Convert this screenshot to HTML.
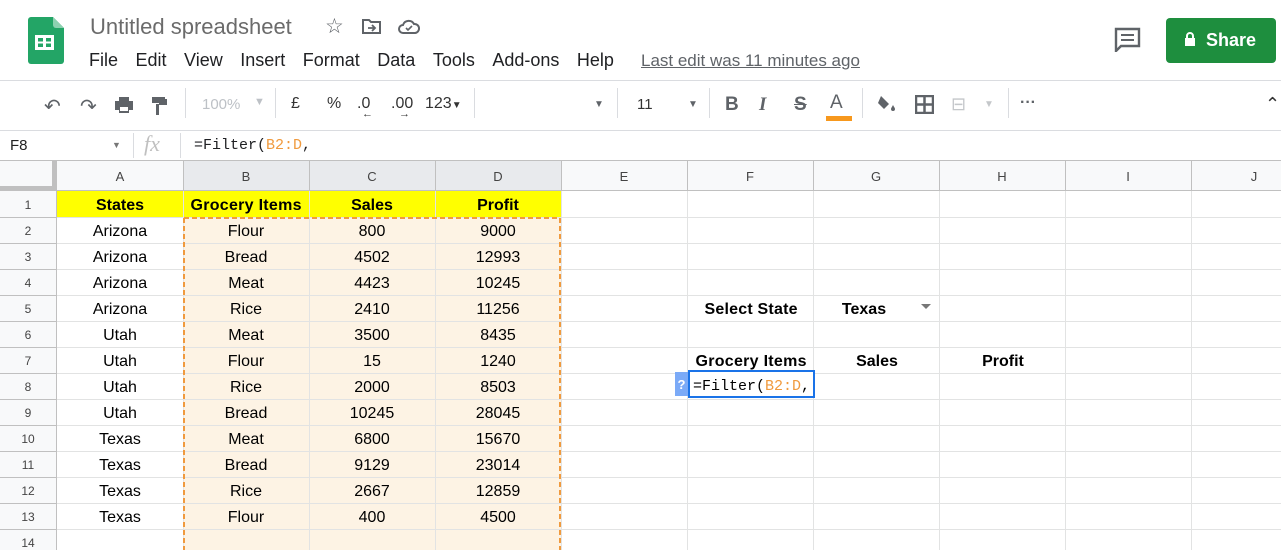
<!DOCTYPE html>
<html><head><style>
*{margin:0;padding:0;box-sizing:border-box}
body{width:1281px;height:550px;overflow:hidden;background:#fff;font-family:"Liberation Sans",Arial,sans-serif;position:relative;color:#202124}
.a{position:absolute}
.menu span{margin-right:17.5px}
.ic{position:absolute;color:#5f6368;font-size:17px}
</style></head><body>
<svg class="a" style="left:28px;top:17px" width="36" height="47" viewBox="0 0 36 47"><path d="M3 0h22l11 11v33a3 3 0 0 1-3 3H3a3 3 0 0 1-3-3V3a3 3 0 0 1 3-3z" fill="#23a566"/><path d="M25 0l11 11H28a3 3 0 0 1-3-3z" fill="#8ed1b1"/><rect x="7" y="18" width="19" height="15" fill="#fff"/><rect x="10" y="21" width="5" height="3.5" fill="#23a566"/><rect x="18" y="21" width="5" height="3.5" fill="#23a566"/><rect x="10" y="26.5" width="5" height="3.5" fill="#23a566"/><rect x="18" y="26.5" width="5" height="3.5" fill="#23a566"/></svg>
<div class="a" style="left:90px;top:14px;font-size:22px;color:#6b6b6b">Untitled spreadsheet</div>
<div class="a" style="left:325px;top:14px;font-size:21px;color:#5f6368">☆</div>
<svg class="a" style="left:362px;top:18px" width="20" height="17"><path d="M1 2h6l2 2h9v11H1z" fill="none" stroke="#5f6368" stroke-width="2"/><path d="M6 10h7M10 7l3 3-3 3" fill="none" stroke="#5f6368" stroke-width="1.8"/></svg>
<svg class="a" style="left:398px;top:18px" width="22" height="17"><path d="M5 15a4 4 0 0 1 0-8 6 6 0 0 1 11-1 4.5 4.5 0 0 1 1 9z" fill="none" stroke="#5f6368" stroke-width="2"/><path d="M8 10l2 2 4-4" fill="none" stroke="#5f6368" stroke-width="1.6"/></svg>
<div class="a menu" style="left:89px;top:50px;font-size:18px;color:#202124;white-space:nowrap"><span>File</span><span>Edit</span><span>View</span><span>Insert</span><span>Format</span><span>Data</span><span>Tools</span><span>Add-ons</span><span>Help</span></div>
<div class="a" style="left:641px;top:51px;font-size:17px;color:#5f6368;text-decoration:underline">Last edit was 11 minutes ago</div>
<svg class="a" style="left:1114px;top:27px" width="27" height="25"><path d="M2 2h23v17H7l-5 5z" fill="none" stroke="#5f6368" stroke-width="2.4"/><path d="M7 8h13M7 13h13" stroke="#5f6368" stroke-width="2"/></svg>
<div class="a" style="left:1166px;top:18px;width:110px;height:45px;background:#1e8e3e;border-radius:4px;color:#fff;font-size:18px;font-weight:bold;line-height:45px;padding-left:40px">Share</div>
<svg class="a" style="left:1184px;top:32px" width="12" height="15"><rect x="1" y="6" width="10" height="8" fill="#fff"/><path d="M3 6V4a3 3 0 0 1 6 0v2" fill="none" stroke="#fff" stroke-width="2"/></svg>
<div class="a" style="left:0;top:80px;width:1281px;height:1px;background:#dadce0"></div>
<div class="ic" style="left:44px;top:94px;font-size:20px">↶</div>
<div class="ic" style="left:80px;top:94px;font-size:20px">↷</div>
<svg class="a" style="left:114px;top:96px" width="20" height="18"><path d="M5 1h10v4H5z M1 5h18v9h-4v3H5v-3H1z" fill="#5f6368"/><rect x="6" y="11" width="8" height="4" fill="#fff"/></svg>
<svg class="a" style="left:151px;top:96px" width="16" height="20"><path d="M1 1h13v6H1z M14 3h2v6H8v10H5V8h3v-1" fill="#5f6368"/></svg>
<div class="a" style="left:185px;top:88px;width:1px;height:30px;background:#dadce0"></div>
<div class="ic" style="left:202px;top:96px;font-size:15px;color:#bdc1c6">100%</div>
<div class="ic" style="left:254px;top:96px;font-size:11px;color:#bdc1c6">▼</div>
<div class="a" style="left:275px;top:88px;width:1px;height:30px;background:#dadce0"></div>
<div class="ic" style="left:291px;top:95px;font-size:16px;color:#333">£</div>
<div class="ic" style="left:327px;top:95px;font-size:16px;color:#333">%</div>
<div class="ic" style="left:357px;top:95px;font-size:16px;color:#333">.0</div>
<div class="ic" style="left:362px;top:108px;font-size:11px;color:#333">←</div>
<div class="ic" style="left:391px;top:95px;font-size:16px;color:#333">.00</div>
<div class="ic" style="left:399px;top:108px;font-size:11px;color:#333">→</div>
<div class="ic" style="left:425px;top:95px;font-size:16px;color:#333">123<span style="font-size:10px">▼</span></div>
<div class="a" style="left:474px;top:88px;width:1px;height:30px;background:#dadce0"></div>
<div class="ic" style="left:594px;top:99px;font-size:10px">▼</div>
<div class="a" style="left:617px;top:88px;width:1px;height:30px;background:#dadce0"></div>
<div class="ic" style="left:637px;top:96px;font-size:15px;color:#333">11</div>
<div class="ic" style="left:688px;top:99px;font-size:10px">▼</div>
<div class="a" style="left:709px;top:88px;width:1px;height:30px;background:#dadce0"></div>
<div class="ic" style="left:725px;top:94px;font-size:19px;font-weight:bold">B</div>
<div class="ic" style="left:759px;top:94px;font-size:19px;font-style:italic;font-weight:bold;font-family:'Liberation Serif',serif">I</div>
<div class="ic" style="left:794px;top:94px;font-size:19px;text-decoration:line-through;font-weight:bold">S</div>
<div class="ic" style="left:830px;top:92px;font-size:19px">A</div>
<div class="a" style="left:826px;top:116px;width:26px;height:5px;background:#f7981d"></div>
<div class="a" style="left:862px;top:88px;width:1px;height:30px;background:#dadce0"></div>
<svg class="a" style="left:877px;top:94px" width="20" height="18"><path d="M4 2l8 8-5 5-6-6z" fill="#5f6368"/><path d="M16 11c1 2 2 3 2 4a2 2 0 0 1-4 0c0-1 1-2 2-4z" fill="#5f6368"/></svg>
<svg class="a" style="left:915px;top:95px" width="19" height="19"><rect x="1" y="1" width="17" height="17" fill="none" stroke="#5f6368" stroke-width="2.5"/><path d="M9.5 1v17M1 9.5h17" stroke="#5f6368" stroke-width="2.5"/></svg>
<div class="ic" style="left:951px;top:94px;color:#c4c7ca;font-size:18px">⊟</div>
<div class="ic" style="left:984px;top:99px;font-size:10px;color:#c4c7ca">▼</div>
<div class="a" style="left:1008px;top:88px;width:1px;height:30px;background:#dadce0"></div>
<div class="ic" style="left:1020px;top:94px;font-size:16px;font-weight:bold">···</div>
<div class="ic" style="left:1265px;top:94px;font-size:18px;color:#333">⌃</div>
<div class="a" style="left:0;top:130px;width:1281px;height:1px;background:#dadce0"></div>
<div class="a" style="left:10px;top:137px;font-size:15px;color:#222">F8</div>
<div class="a" style="left:112px;top:140px;font-size:9px;color:#777">▼</div>
<div class="a" style="left:133px;top:133px;width:1px;height:25px;background:#dadce0"></div>
<div class="a" style="left:144px;top:131px;font-size:22px;font-style:italic;color:#c0c0c0;font-family:'Liberation Serif',serif">fx</div>
<div class="a" style="left:180px;top:133px;width:1px;height:25px;background:#dadce0"></div>
<div class="a" style="left:194px;top:137px;font-size:15px;font-family:'Liberation Mono',monospace">=Filter(<span style="color:#f09a3e">B2:D</span>,</div>
<div class="a" style="left:0;top:160px;width:1281px;height:1px;background:#c0c0c0"></div>
<svg class="a" style="left:0;top:161px" width="1281" height="389">
<rect x="0" y="0" width="1281" height="30" fill="#f8f9fa"/>
<rect x="183" y="0" width="378" height="30" fill="#e8eaed"/>
<rect x="0" y="30" width="57" height="359" fill="#f8f9fa"/>
<rect x="52" y="0" width="5" height="30" fill="#c0c0c0"/>
<rect x="0" y="25" width="57" height="5" fill="#c0c0c0"/>
<rect x="57" y="30" width="504" height="26" fill="#ffff00"/>
<rect x="183" y="56" width="378" height="333" fill="#fdf3e4"/>
<g stroke="#e2e3e3" stroke-width="1">
<path d="M57 82.5h1224M57 108.5h1224M57 134.5h1224M57 160.5h1224M57 186.5h1224M57 212.5h1224M57 238.5h1224M57 264.5h1224M57 290.5h1224M57 316.5h1224M57 342.5h1224M57 368.5h1224M57 56.5h1224"/>
<path d="M183.5 30v359M309.5 30v359M435.5 30v359M561.5 30v359M687.5 30v359M813.5 30v359M939.5 30v359M1065.5 30v359M1191.5 30v359"/>
</g>
<g stroke="#c0c0c0"><path d="M0 29.5h1281M56.5 0v389M183.5 0v30M309.5 0v30M435.5 0v30M561.5 0v30M687.5 0v30M813.5 0v30M939.5 0v30M1065.5 0v30M1191.5 0v30"/>
<path d="M0 56.5h57M0 82.5h57M0 108.5h57M0 134.5h57M0 160.5h57M0 186.5h57M0 212.5h57M0 238.5h57M0 264.5h57M0 290.5h57M0 316.5h57M0 342.5h57M0 368.5h57"/></g>
<path d="M184 57H560V389M184 57V389" fill="none" stroke="#f09a3e" stroke-width="2" stroke-dasharray="5,3"/>
<g font-family="Liberation Sans" font-size="13" fill="#444" text-anchor="middle">
<text x="120" y="20">A</text><text x="246" y="20">B</text><text x="372" y="20">C</text><text x="498" y="20">D</text><text x="624" y="20">E</text><text x="750" y="20">F</text><text x="876" y="20">G</text><text x="1002" y="20">H</text><text x="1128" y="20">I</text><text x="1254" y="20">J</text>
<g font-size="12"><text x="28" y="48">1</text><text x="28" y="74">2</text><text x="28" y="100">3</text><text x="28" y="126">4</text><text x="28" y="152">5</text><text x="28" y="178">6</text><text x="28" y="204">7</text><text x="28" y="230">8</text><text x="28" y="256">9</text><text x="28" y="282">10</text><text x="28" y="308">11</text><text x="28" y="334">12</text><text x="28" y="360">13</text><text x="28" y="386">14</text></g>
</g>
<g font-family="Liberation Sans" font-size="16" fill="#000" text-anchor="middle">
<g font-weight="bold"><text x="120" y="49">States</text><text x="246" y="49" textLength="111">Grocery Items</text><text x="372" y="49">Sales</text><text x="498" y="49">Profit</text>
<text x="751" y="153" textLength="93">Select State</text><text x="864" y="153">Texas</text>
<text x="751" y="205" textLength="111">Grocery Items</text><text x="877" y="205">Sales</text><text x="1003" y="205">Profit</text></g>
<text x="120" y="75">Arizona</text><text x="246" y="75">Flour</text><text x="372" y="75">800</text><text x="498" y="75">9000</text>
<text x="120" y="101">Arizona</text><text x="246" y="101">Bread</text><text x="372" y="101">4502</text><text x="498" y="101">12993</text>
<text x="120" y="127">Arizona</text><text x="246" y="127">Meat</text><text x="372" y="127">4423</text><text x="498" y="127">10245</text>
<text x="120" y="153">Arizona</text><text x="246" y="153">Rice</text><text x="372" y="153">2410</text><text x="498" y="153">11256</text>
<text x="120" y="179">Utah</text><text x="246" y="179">Meat</text><text x="372" y="179">3500</text><text x="498" y="179">8435</text>
<text x="120" y="205">Utah</text><text x="246" y="205">Flour</text><text x="372" y="205">15</text><text x="498" y="205">1240</text>
<text x="120" y="231">Utah</text><text x="246" y="231">Rice</text><text x="372" y="231">2000</text><text x="498" y="231">8503</text>
<text x="120" y="257">Utah</text><text x="246" y="257">Bread</text><text x="372" y="257">10245</text><text x="498" y="257">28045</text>
<text x="120" y="283">Texas</text><text x="246" y="283">Meat</text><text x="372" y="283">6800</text><text x="498" y="283">15670</text>
<text x="120" y="309">Texas</text><text x="246" y="309">Bread</text><text x="372" y="309">9129</text><text x="498" y="309">23014</text>
<text x="120" y="335">Texas</text><text x="246" y="335">Rice</text><text x="372" y="335">2667</text><text x="498" y="335">12859</text>
<text x="120" y="361">Texas</text><text x="246" y="361">Flour</text><text x="372" y="361">400</text><text x="498" y="361">4500</text>
</g>
<path d="M921 143h10l-5 5z" fill="#777"/>
<rect x="675" y="211" width="13" height="24" fill="#7baaf7"/>
<text x="681.5" y="228" font-family="Liberation Sans" font-size="13" font-weight="bold" fill="#fff" text-anchor="middle">?</text>
<rect x="689" y="210" width="125" height="26" fill="#fff" stroke="#1a73e8" stroke-width="2"/>
<text x="693" y="229" font-family="Liberation Mono" font-size="15" fill="#000">=Filter(<tspan fill="#f09a3e">B2:D</tspan>,</text>
</svg>
</body></html>
